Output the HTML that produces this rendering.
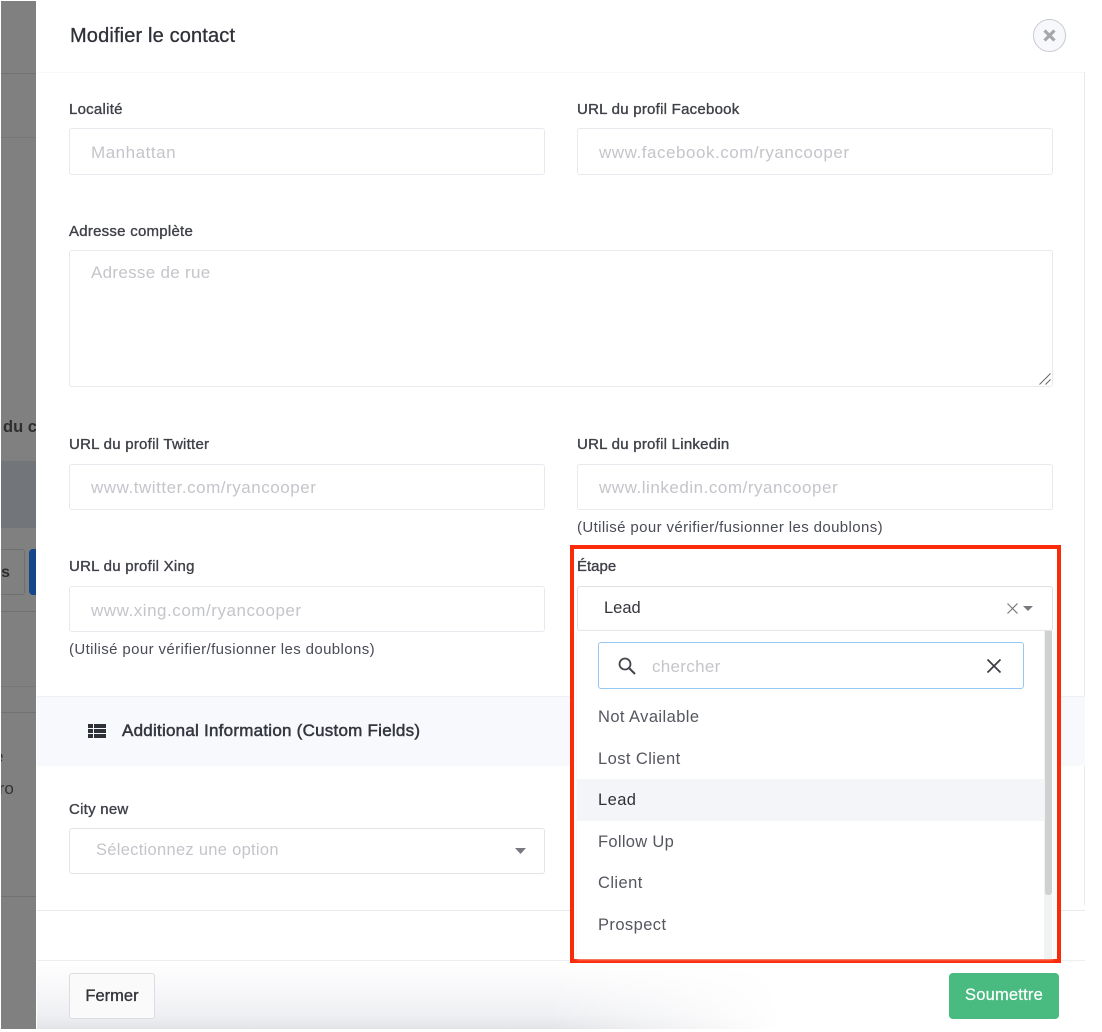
<!DOCTYPE html>
<html lang="fr"><head><meta charset="utf-8"><title>Modifier le contact</title>
<style>
html,body{margin:0;padding:0;background:#fff}
body{position:relative;width:1102px;height:1032px;overflow:hidden;font-family:"Liberation Sans",sans-serif;color:#3f4254}
.a{position:absolute;white-space:nowrap}
.l{position:absolute;white-space:nowrap;font-size:15px;letter-spacing:.25px;line-height:18px;color:#3f4148;-webkit-text-stroke:.35px #3f4148;margin-top:1px}
.i{position:absolute;box-sizing:border-box;background:#fff;border:1px solid #e8e9ef;border-radius:3px;width:477px;height:47px}
.p{position:absolute;white-space:nowrap;font-size:17px;line-height:20px;color:#c4c5ca;letter-spacing:.53px;margin-top:1px}
.h{position:absolute;white-space:nowrap;font-size:15px;line-height:18px;color:#494c57;letter-spacing:.38px;margin-top:1px}
.o{position:absolute;left:598px;white-space:nowrap;font-size:16.5px;line-height:20px;color:#55575f;letter-spacing:.42px}
</style></head><body>
<div class="a" style="left:1px;top:1px;width:35px;height:1028px;background:#808080;overflow:hidden">
<div class="a" style="left:0;top:72px;width:35px;height:1px;background:#727272"></div>
<div class="a" style="left:0;top:136px;width:35px;height:1px;background:#777"></div>
<div class="a" style="left:0;top:460px;width:35px;height:67px;background:#72757a"></div>
<div class="a" style="left:2px;top:416px;font-size:16.5px;font-weight:bold;line-height:20px;color:#2e2e2e">du c</div>
<div class="a" style="left:-8px;top:548px;width:32px;height:46px;box-sizing:border-box;border:1px solid #6f6f6f;border-radius:3px"></div>
<div class="a" style="left:-11px;top:562px;width:20px;font-size:16px;font-weight:bold;line-height:20px;color:#2e2e2e;text-align:right">s</div>
<div class="a" style="left:28px;top:548px;width:12px;height:46px;background:#14468a;border-radius:4px"></div>
<div class="a" style="left:0;top:610px;width:35px;height:1px;background:#727272"></div>
<div class="a" style="left:0;top:685px;width:35px;height:1px;background:#777"></div>
<div class="a" style="left:0;top:711px;width:35px;height:1px;background:#727272"></div>
<div class="a" style="left:-7px;top:746px;font-size:17px;line-height:20px;color:#333">e</div>
<div class="a" style="left:-8px;top:778px;font-size:17px;line-height:20px;color:#333">rro</div>
<div class="a" style="left:0;top:895px;width:35px;height:1px;background:#727272"></div>
</div>

<div class="a" style="left:70px;top:24px;font-size:20px;letter-spacing:.15px;line-height:24px;color:#2f3138;-webkit-text-stroke:.3px #2f3138">Modifier le contact</div>
<div class="a" style="left:1033px;top:19px;width:33px;height:33px;box-sizing:border-box;border:1px solid #c9cacd;border-radius:50%;background:#f7f8fb"></div>
<svg class="a" style="left:1033px;top:19px" width="33" height="33"><path d="M11.5 11.5L21.5 21.5M21.5 11.5L11.5 21.5" stroke="#a6a7aa" stroke-width="3.2" fill="none"/></svg>
<div class="a" style="left:37px;top:72px;width:1048px;height:1px;background:#f8f8fa"></div>
<div class="a" style="left:1084px;top:72px;width:1px;height:624px;background:#e9e9ec"></div>

<div class="l" style="left:69px;top:100px">Localité</div>
<div class="i" style="left:69px;top:128px;width:476px"></div>
<div class="p" style="left:91px;top:142px">Manhattan</div>
<div class="l" style="left:577px;top:100px">URL du profil Facebook</div>
<div class="i" style="left:577px;top:128px;width:476px"></div>
<div class="p" style="left:599px;top:142px">www.facebook.com/ryancooper</div>

<div class="l" style="left:69px;top:222px">Adresse complète</div>
<div class="i" style="left:69px;top:250px;width:984px;height:137px"></div>
<div class="p" style="left:91px;top:262px;letter-spacing:.3px">Adresse de rue</div>
<svg class="a" style="left:1038px;top:372px" width="14" height="14"><path d="M1.5 12.5L12.5 1.5M7.5 12.5L12.5 7.5" stroke="#666" stroke-width="1" fill="none"/></svg>

<div class="l" style="left:69px;top:435px">URL du profil Twitter</div>
<div class="i" style="left:69px;top:464px;width:476px;height:46px"></div>
<div class="p" style="left:91px;top:477px">www.twitter.com/ryancooper</div>
<div class="l" style="left:577px;top:435px">URL du profil Linkedin</div>
<div class="i" style="left:577px;top:464px;width:476px;height:46px"></div>
<div class="p" style="left:599px;top:477px">www.linkedin.com/ryancooper</div>
<div class="h" style="left:577px;top:518px">(Utilisé pour vérifier/fusionner les doublons)</div>

<div class="l" style="left:69px;top:557px">URL du profil Xing</div>
<div class="i" style="left:69px;top:586px;width:476px;height:46px"></div>
<div class="p" style="left:91px;top:600px">www.xing.com/ryancooper</div>
<div class="h" style="left:69px;top:640px">(Utilisé pour vérifier/fusionner les doublons)</div>

<div class="a" style="left:37px;top:696px;width:1048px;height:70px;background:#f8f9fc;border-top:1px solid #eff0f3;box-sizing:border-box"></div>
<svg class="a" style="left:88px;top:724px" width="18" height="15"><path fill="#2f3138" d="M0 0h5v4H0zM6 0h12v4H6zM0 5h5v4H0zM6 5h12v4H6zM0 10h5v4H0zM6 10h12v4H6z"/></svg>
<div class="a" style="left:122px;top:721px;font-size:17px;letter-spacing:.24px;line-height:20px;color:#34363e;-webkit-text-stroke:.5px #34363e">Additional Information (Custom Fields)</div>

<div class="l" style="left:69px;top:800px">City new</div>
<div class="i" style="left:69px;top:828px;width:476px;height:46px;border-color:#e3e4e8"></div>
<div class="a" style="left:96px;top:840px;font-size:16.5px;line-height:20px;color:#c4c5ca;letter-spacing:.29px">Sélectionnez une option</div>
<svg class="a" style="left:515px;top:848px" width="11" height="6"><path d="M0 0h11L5.500 6z" fill="#77797f"/></svg>

<div class="a" style="left:37px;top:910px;width:1048px;height:1px;background:#e9e9ec"></div>
<div class="a" style="left:1084px;top:766px;width:1px;height:139px;background:#e9e9ec"></div>
<div class="a" style="left:37px;top:960px;width:1048px;height:1px;background:#eeeef0"></div>
<div class="a" style="left:37px;top:961px;width:1065px;height:68px;background:linear-gradient(#fff 0,#f8f8fa 40%,#eff0f3 78%,#e3e4e7 100%);-webkit-mask-image:linear-gradient(to right,#000 48%,transparent 70%);mask-image:linear-gradient(to right,#000 48%,transparent 70%)"></div>
<div class="a" style="left:69px;top:973px;width:86px;height:46px;box-sizing:border-box;border:1px solid #dcdde0;border-radius:3px;background:#fafafa;text-align:center;font-size:16.5px;line-height:45px;color:#33353b;-webkit-text-stroke:.35px #33353b">Fermer</div>
<div class="a" style="left:949px;top:973px;width:110px;height:46px;border-radius:4px;background:#4abb80;text-align:center;font-size:16.5px;line-height:45px;color:#fff;letter-spacing:.2px;-webkit-text-stroke:.2px #fff">Soumettre</div>

<div class="a" style="left:570px;top:545px;width:491px;height:418px;box-sizing:border-box;border:4px solid #fb2b0a;background:#fff"></div>
<div class="l" style="left:577px;top:557px;letter-spacing:0">Étape</div>
<div class="i" style="left:577px;top:586px;width:476px;height:45px;border-color:#e0e1e5"></div>
<div class="a" style="left:604px;top:598px;font-size:16.5px;line-height:21px;color:#33353b">Lead</div>
<svg class="a" style="left:1006px;top:602px" width="13" height="13"><path d="M1.500 1.500L11.500 11.500M11.500 1.500L1.500 11.500" stroke="#7b7c80" stroke-width="1.200" fill="none"/></svg>
<svg class="a" style="left:1023px;top:606px" width="10" height="5"><path d="M0 0h10L5 5z" fill="#77797f"/></svg>
<div class="a" style="left:577px;top:631px;width:476px;height:328px;background:#fff;box-shadow:0 0 3px #eee"></div>
<div class="a" style="left:1044px;top:631px;width:8px;height:328px;background:#f1f2f2"></div>
<div class="a" style="left:1045px;top:631px;width:7px;height:264px;background:#cfd0d0;border-radius:0 0 3px 3px"></div>
<div class="a" style="left:598px;top:642px;width:426px;height:47px;box-sizing:border-box;border:1px solid #97c7f3;border-radius:3px;background:#fff"></div>
<svg class="a" style="left:617px;top:656px" width="20" height="20"><circle cx="8" cy="8" r="5.500" fill="none" stroke="#44464c" stroke-width="1.800"/><path d="M12 12L18 18" stroke="#44464c" stroke-width="2"/></svg>
<div class="a" style="left:652px;top:657px;font-size:17px;line-height:20px;color:#c4c5ca;letter-spacing:.3px">chercher</div>
<svg class="a" style="left:985px;top:657px" width="18" height="18"><path d="M2.500 2.500L15.500 15.500M15.500 2.500L2.500 15.500" stroke="#3b3d43" stroke-width="1.700" fill="none"/></svg>
<div class="o" style="top:707px">Not Available</div>
<div class="o" style="top:749px">Lost Client</div>
<div class="a" style="left:577px;top:779px;width:467px;height:42px;background:#f4f5f9"></div>
<div class="o" style="top:790px;color:#2f3138">Lead</div>
<div class="o" style="top:832px;letter-spacing:.3px">Follow Up</div>
<div class="o" style="top:873px">Client</div>
<div class="o" style="top:915px">Prospect</div>
</body></html>
